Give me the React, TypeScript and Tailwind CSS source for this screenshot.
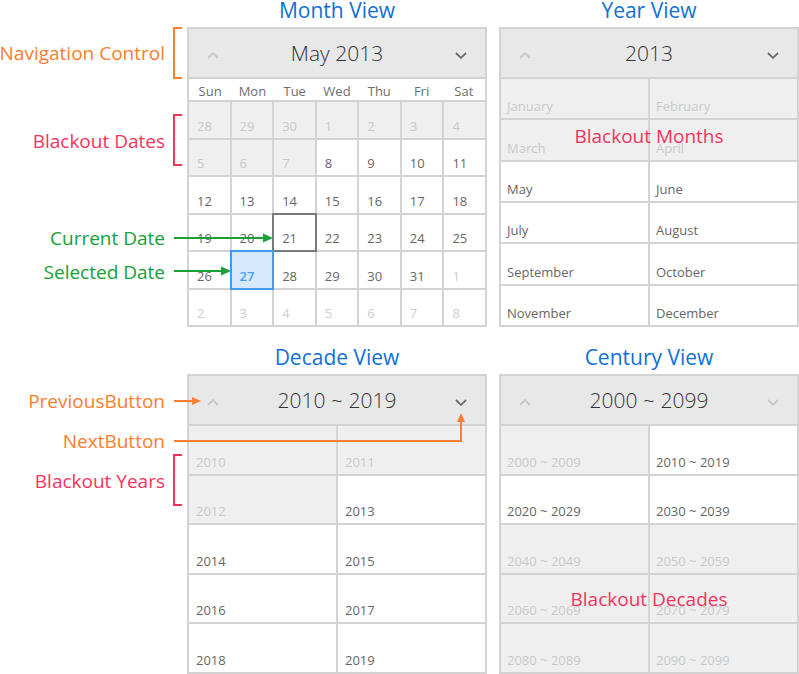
import type { ReactNode } from 'react';

const GRID = 'bg-[#d3d3d3]';

type CellKind = 'normal' | 'blackout' | 'faded' | 'current' | 'selected';

interface Cell {
  label: string;
  kind: CellKind;
}

const Chevron = ({ dir, enabled }: { dir: 'up' | 'down'; enabled: boolean }) => (
  <svg width="12" height="7" viewBox="0 0 12 7" className="mt-[4px]">
    <path
      d={dir === 'up' ? 'M1 6 L6 1.2 L11 6' : 'M1 1 L6 5.8 L11 1'}
      fill="none"
      stroke={enabled ? '#6a6a6a' : '#c6c6c6'}
      strokeWidth="1.8"
    />
  </svg>
);

const Title = ({ children }: { children: ReactNode }) => (
  <div className="flex h-[27px] items-end justify-center pb-[7px]">
    <span className="text-[21px] leading-[20px] text-[#1170d5]">{children}</span>
  </div>
);

interface CalendarProps {
  heading: string;
  nextEnabled: boolean;
  children: ReactNode;
}

const Calendar = ({ heading, nextEnabled, children }: CalendarProps) => (
  <div className={`flex h-[300px] flex-col gap-[2px] border-2 border-[#d3d3d3] ${GRID}`}>
    <div className="flex h-[48px] shrink-0 items-center justify-between bg-[#e8e8e8] px-[18px]">
      <Chevron dir="up" enabled={false} />
      <span className="text-[21px] font-light leading-[28px] text-[#333333]">{heading}</span>
      <Chevron dir="down" enabled={nextEnabled} />
    </div>
    {children}
  </div>
);

const cellClass = (kind: CellKind) => {
  switch (kind) {
    case 'blackout':
      return 'bg-[#efefef] text-[#c9c9c9]';
    case 'faded':
      return 'bg-white text-[#cdcdcd]';
    case 'current':
      return 'relative z-10 bg-white text-[#6a6a6a] ring-2 ring-[#7a7a7a]';
    case 'selected':
      return 'relative z-10 bg-[#d6e9fd] font-semibold text-[#4a9ff0] ring-2 ring-[#3d9bf3]';
    default:
      return 'bg-white text-[#666666]';
  }
};

const CellGrid = ({ cells, cols, rows, pl }: { cells: Cell[]; cols: string; rows: string; pl: string }) => (
  <div className={`grid flex-1 gap-[2px] ${cols} ${rows}`}>
    {cells.map((c, i) => (
      <div key={i} className={`flex items-end pb-[3px] ${pl} text-[13px] leading-[18px] ${cellClass(c.kind)}`}>
        {c.label}
      </div>
    ))}
  </div>
);

const monthCells: Cell[] = [
  ...[28, 29, 30].map((d) => ({ label: String(d), kind: 'blackout' as CellKind })),
  ...Array.from({ length: 31 }, (_, i) => {
    const d = i + 1;
    let kind: CellKind = 'normal';
    if (d <= 7) kind = 'blackout';
    if (d === 21) kind = 'current';
    if (d === 27) kind = 'selected';
    return { label: String(d), kind };
  }),
  ...Array.from({ length: 8 }, (_, i) => ({ label: String(i + 1), kind: 'faded' as CellKind })),
];

const months = ['January', 'February', 'March', 'April', 'May', 'June', 'July', 'August', 'September', 'October', 'November', 'December'];
const yearCells: Cell[] = months.map((m, i) => ({ label: m, kind: i < 4 ? 'blackout' : 'normal' }));

const decadeCells: Cell[] = Array.from({ length: 10 }, (_, i) => ({
  label: String(2010 + i),
  kind: i < 3 ? 'blackout' : 'normal',
}));

const centuryCells: Cell[] = Array.from({ length: 10 }, (_, i) => {
  const start = 2000 + i * 10;
  return { label: `${start} ~ ${start + 9}`, kind: i === 0 || i >= 4 ? 'blackout' : 'normal' };
});

const days = ['Sun', 'Mon', 'Tue', 'Wed', 'Thu', 'Fri', 'Sat'];

const Label = ({ top, color, children }: { top: number; color: string; children: ReactNode }) => (
  <div className={`absolute right-[634px] text-[19px] leading-[24px] whitespace-nowrap ${color}`} style={{ top: top - 12 }}>
    {children}
  </div>
);

export default function App() {
  return (
    <div className="relative h-[674px] w-[799px] overflow-hidden bg-white font-['Open_Sans','Noto_Sans',sans-serif]">
      <div className="flex flex-col gap-[20px]">
        <div className="flex">
          <div className="w-[187px] shrink-0" />
          <div className="w-[300px] shrink-0">
            <Title>Month View</Title>
            <Calendar heading="May 2013" nextEnabled>
              <div className="grid h-[21px] shrink-0 grid-cols-7 bg-white text-center text-[13px] leading-[21px] text-[#6e6e6e]">
                {days.map((d) => (
                  <span key={d} className="pt-[2px]">{d}</span>
                ))}
              </div>
              <CellGrid cells={monthCells} cols="grid-cols-7" rows="grid-rows-6" pl="pl-[8px]" />
            </Calendar>
          </div>
          <div className="w-[12px] shrink-0" />
          <div className="w-[300px] shrink-0">
            <Title>Year View</Title>
            <Calendar heading="2013" nextEnabled>
              <CellGrid cells={yearCells} cols="grid-cols-2" rows="grid-rows-6" pl="pl-[6px]" />
            </Calendar>
          </div>
        </div>
        <div className="flex">
          <div className="w-[187px] shrink-0" />
          <div className="w-[300px] shrink-0">
            <Title>Decade View</Title>
            <Calendar heading="2010 ~ 2019" nextEnabled>
              <CellGrid cells={decadeCells} cols="grid-cols-2" rows="grid-rows-5" pl="pl-[7px]" />
            </Calendar>
          </div>
          <div className="w-[12px] shrink-0" />
          <div className="w-[300px] shrink-0">
            <Title>Century View</Title>
            <Calendar heading="2000 ~ 2099" nextEnabled={false}>
              <CellGrid cells={centuryCells} cols="grid-cols-2" rows="grid-rows-5" pl="pl-[6px]" />
            </Calendar>
          </div>
        </div>
      </div>

      {/* callouts */}
      <Label top={53} color="text-[#fb7d2f]">Navigation Control</Label>
      <Label top={141} color="text-[#f5345b]">Blackout Dates</Label>
      <Label top={238} color="text-[#16a035]">Current Date</Label>
      <Label top={272} color="text-[#16a035]">Selected Date</Label>
      <Label top={401} color="text-[#fb7d2f]">PreviousButton</Label>
      <Label top={441} color="text-[#fb7d2f]">NextButton</Label>
      <Label top={481} color="text-[#f5345b]">Blackout Years</Label>

      <div className="absolute left-[499px] top-[124px] w-[300px] text-center text-[19px] leading-[24px] text-[#f5345b]">
        Blackout Months
      </div>
      <div className="absolute left-[499px] top-[587px] w-[300px] text-center text-[19px] leading-[24px] text-[#f5345b]">
        Blackout Decades
      </div>

      <svg className="pointer-events-none absolute inset-0" width="799" height="674">
        <path d="M182 28 H174 V78 H182" fill="none" stroke="#fb7d2f" strokeWidth="2" />
        <path d="M182 115 H174 V165 H182" fill="none" stroke="#f5345b" strokeWidth="2" />
        <path d="M182 455 H174 V505 H182" fill="none" stroke="#f5345b" strokeWidth="2" />

        <line x1="174" y1="238" x2="264" y2="238" stroke="#16a035" strokeWidth="2" />
        <polygon points="273,238 263,233.5 263,242.5" fill="#16a035" />
        <line x1="174" y1="271" x2="222" y2="271" stroke="#16a035" strokeWidth="2" />
        <polygon points="231,271 221,266.5 221,275.5" fill="#16a035" />

        <line x1="174" y1="401" x2="193" y2="401" stroke="#fb7d2f" strokeWidth="2" />
        <polygon points="201,401 192,397 192,405" fill="#fb7d2f" />
        <path d="M174 441 H461 V421" fill="none" stroke="#fb7d2f" strokeWidth="2" />
        <polygon points="461,413 457,422 465,422" fill="#fb7d2f" />
      </svg>
    </div>
  );
}
